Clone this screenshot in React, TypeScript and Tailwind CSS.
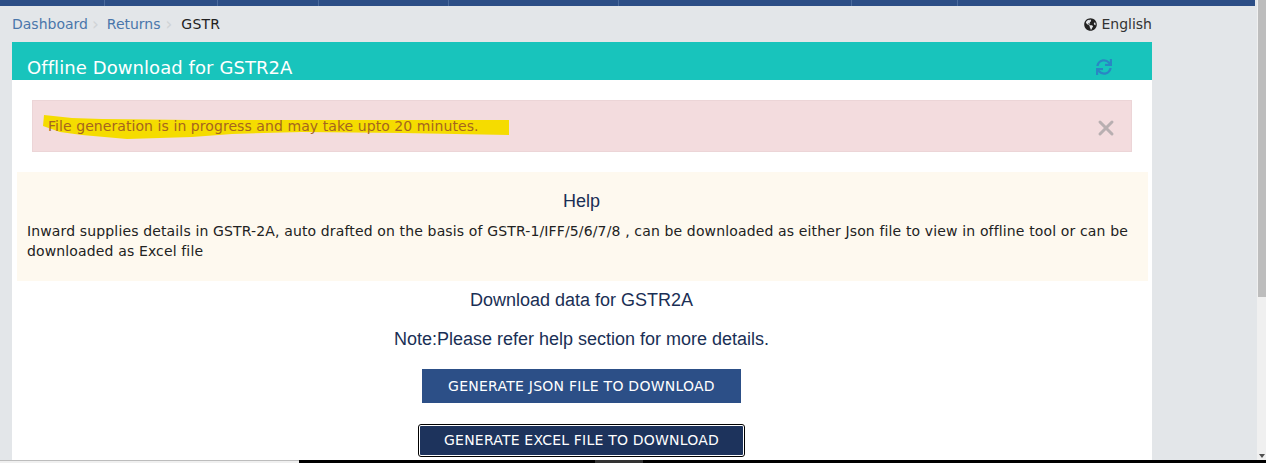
import { FaGlobeAmericas, FaSync } from "react-icons/fa";
import { X } from "lucide-react";

const verdana = "font-['DejaVu_Sans',sans-serif]";
const arial = "font-['Liberation_Sans',Arial,sans-serif]";

function TopBar() {
  const widths = ["w-[105px]", "w-[113px]", "w-[101px]", "w-[130px]", "w-[170px]", "w-[233px]", "w-[106px]"];
  return (
    <div className="flex h-[6px] w-[1255px] bg-[#2c4e86]">
      {widths.map((w) => (
        <div key={w} className={`h-full ${w} border-r border-[#4a6a9c]`} />
      ))}
    </div>
  );
}

function Breadcrumbs() {
  return (
    <div className={`flex h-[36px] items-center justify-between pl-3 pr-[105px] text-[14px] ${verdana}`}>
      <div className="flex items-center">
        <a className="text-[#4a76ab]">Dashboard</a>
        <span className="ml-[4px] mr-[8px] text-[17px] leading-none text-[#d0d3d6]">›</span>
        <a className="text-[#4a76ab]">Returns</a>
        <span className="ml-[5px] mr-[9px] text-[17px] leading-none text-[#d0d3d6]">›</span>
        <span className="tracking-[0.2px] text-[#222]">GSTR</span>
      </div>
      <div className="flex items-center gap-[4px] text-[#333]">
        <FaGlobeAmericas className="h-[13px] w-[13px] text-[#222]" />
        <span>English</span>
      </div>
    </div>
  );
}

function Highlight() {
  // marker stroke someone drew over the message
  return (
    <svg className="absolute left-[-6px] top-[-1px] h-[26px] w-[470px]" viewBox="0 0 470 26">
      <path
        d="M2 0 L30 3 L60 4 L150 5 L260 5 L360 5 L467 5 L467 20 L360 18 L260 17 L190 19 L150 22 L85 24 L40 20 L18 17 L1 11 Z"
        fill="#f5dc00"
      />
    </svg>
  );
}

function Scrollbar() {
  return (
    <div className="flex w-[9px] flex-col items-end bg-[#f0f0f0] pl-px">
      <div className="h-[297px] w-full bg-[#bdbdbd]" />
      <div className="mt-auto mb-[2px] mr-px h-0 w-0 border-x-[3px] border-t-[4px] border-x-transparent border-t-[#505050]" />
    </div>
  );
}

export default function App() {
  return (
    <div className="flex h-[463px] w-[1266px] flex-col overflow-hidden bg-[#e3e6e9]">
      <div className="flex min-h-0 flex-1">
        <div className="w-[1257px]">
          <TopBar />
          <Breadcrumbs />
          <div className="ml-3 h-[418px] w-[1140px] bg-white">
            <div className={`flex h-[38px] items-end justify-between bg-[#18c4bc] pl-[15px] pr-[40px] text-[18px] tracking-[0.08px] text-white ${verdana}`}>
              <span className="leading-[24px]">Offline Download for GSTR2A</span>
              <FaSync className="mb-[5px] h-[16px] w-[16px] text-[#2a86c4]" />
            </div>
            <div className="px-[20px] pt-[20px]">
              <div className={`flex h-[52px] items-center justify-between border border-[#ecd5d7] bg-[#f3dcde] pl-[15px] pr-[13px] text-[14px] tracking-[0.07px] text-[#a5651f] ${verdana}`}>
                <span className="relative mt-[1px]">
                  <Highlight />
                  <span className="relative">File generation is in progress and may take upto 20 minutes.</span>
                </span>
                <X className="mt-[4px] h-[24px] w-[24px] text-[#b8afb1]" strokeWidth={3} />
              </div>
            </div>
            <div className={`ml-[5px] mt-[20px] h-[109px] w-[1131px] bg-[#fef9ef] px-[10px] text-[14px] leading-[20px] tracking-[0.14px] text-[#222] ${verdana}`}>
              <h4 className={`pt-[17px] pr-[2px] text-center text-[18px] leading-[24px] tracking-normal text-[#1a2f55] ${arial}`}>Help</h4>
              <p className="mt-[8px]">
                Inward supplies details in GSTR-2A, auto drafted on the basis of GSTR-1/IFF/5/6/7/8 , can be downloaded as either Json file to view in offline tool or can be downloaded as Excel file
              </p>
            </div>
            <div className={`flex w-[1131px] flex-col items-center text-[#1a2f55] ${arial}`}>
              <p className="ml-[8px] mt-[9px] text-[18px] leading-[21px]">Download data for GSTR2A</p>
              <p className="ml-[8px] mt-[18px] text-[18px] leading-[21px]">Note:Please refer help section for more details.</p>
              <button className={`ml-[8px] mt-[19px] h-[34px] w-[319px] shrink-0 bg-[#2c4f87] text-[14px] tracking-[0.25px] text-white ${verdana}`}>
                GENERATE JSON FILE TO DOWNLOAD
              </button>
              <button className={`ml-[8px] mt-[21px] h-[33px] w-[327px] shrink-0 rounded-[3px] border-2 border-white bg-[#1d335c] text-[14px] tracking-[0.2px] text-white outline outline-1 -outline-offset-1 outline-black ${verdana}`}>
                GENERATE EXCEL FILE TO DOWNLOAD
              </button>
            </div>
          </div>
        </div>
        <Scrollbar />
      </div>
      <div className="flex h-[3px] shrink-0">
        <div className="h-full w-[299px] border-t border-[#bdbdbd] bg-[#f0f0f0]" />
        <div className="w-[296px] bg-black" />
        <div className="w-[48px] bg-[#333]" />
        <div className="flex-1 bg-black" />
      </div>
    </div>
  );
}
